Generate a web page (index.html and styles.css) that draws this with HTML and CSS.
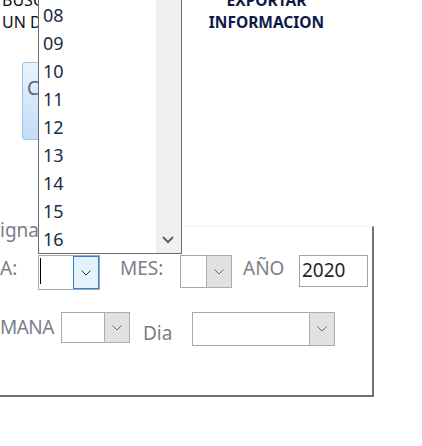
FILE: index.html
```html
<!DOCTYPE html>
<html lang="es">
<head>
<meta charset="utf-8">
<title>Formulario</title>
<link rel="stylesheet" href="styles.css">
</head>
<body>
<div class="page">
  <div class="top">
    <div class="left-col">
      <div class="line cut">BUSCAR</div>
      <div class="line un">UN DIA</div>
      <div class="btn-c"><span>C</span></div>
    </div>
    <div class="export">
      <div class="line">EXPORTAR</div>
      <div class="line">INFORMACION</div>
    </div>
  </div>

  <div class="frame">
    <div class="label igna">igna</div>
    <div class="row row1">
      <span class="label w-a">A:</span>
      <div class="combo c1 focus"><div class="field"><i class="caret"></i></div><div class="btn"><svg width="10" height="6" viewBox="0 0 10 6"><polyline points="0.5,0.5 5,5 9.5,0.5" fill="none" stroke="#333" stroke-width="1"/></svg></div></div>
      <span class="label w-mes">MES:</span>
      <div class="combo c2"><div class="field"></div><div class="btn"><svg width="10" height="6" viewBox="0 0 10 6"><polyline points="0.5,0.5 5,5 9.5,0.5" fill="none" stroke="#666" stroke-width="1"/></svg></div></div>
      <span class="label w-ano">AÑO</span>
      <div class="textbox">2020</div>
    </div>
    <div class="row row2">
      <span class="label w-sem">MANA</span>
      <div class="combo c3"><div class="field"></div><div class="btn"><svg width="10" height="6" viewBox="0 0 10 6"><polyline points="0.5,0.5 5,5 9.5,0.5" fill="none" stroke="#666" stroke-width="1"/></svg></div></div>
      <span class="label w-dia">Dia</span>
      <div class="combo c4"><div class="field"></div><div class="btn"><svg width="10" height="6" viewBox="0 0 10 6"><polyline points="0.5,0.5 5,5 9.5,0.5" fill="none" stroke="#666" stroke-width="1"/></svg></div></div>
    </div>
  </div>

  <div class="list">
    <ul class="items">
      <li>07</li><li>08</li><li>09</li><li>10</li><li>11</li>
      <li>12</li><li>13</li><li>14</li><li>15</li><li>16</li>
    </ul>
    <div class="scroll">
      <svg class="down" width="12" height="8" viewBox="0 0 12 8"><polyline points="1,1 6,6 11,1" fill="none" stroke="#606060" stroke-width="2"/></svg>
    </div>
  </div>
</div>
</body>
</html>
```

FILE: styles.css
```css
* { box-sizing: border-box; }
html, body { margin: 0; padding: 0; background: #fff; }
body {
  width: 422px;
  height: 446px;
  overflow: hidden;
  font-family: "Noto Sans", "Open Sans", sans-serif;
}
.page { position: relative; width: 422px; height: 446px; overflow: hidden; }

.top { display: flex; height: 226px; }
.left-col { width: 160px; flex: none; margin-top: -11px; }
.line { line-height: 22px; white-space: nowrap; }
.cut, .un { font-size: 16px; color: #111; padding-left: 2px; }
.btn-c {
  margin: 29px 0 0 22px;
  width: 120px;
  height: 78px;
  border: 1px solid #9cc4ec;
  border-radius: 3px;
  background: linear-gradient(#e8f2fd, #c4ddf7);
  padding: 14px 0 0 4px;
  font-size: 19px;
  line-height: 22px;
  color: #56657c;
}
.export {
  width: 213px;
  margin-top: -11px;
  text-align: center;
  font-weight: 700;
  font-size: 15.5px;
  color: #0c1a48;
}

.frame {
  width: 374px;
  height: 171px;
  border-top: 1px solid #f0f0f0;
  border-right: 2px solid #727272;
  border-bottom: 2px solid #727272;
}
.label {
  font-size: 19px;
  color: #7a7e89;
  line-height: 26px;
  white-space: nowrap;
  flex: none;
}
.igna { margin-top: -7px; line-height: 20px; height: 20px; }

.row { display: flex; align-items: flex-start; }
.row1 { margin-top: 15px; }
.row2 { margin-top: 22px; }

.w-a { width: 38px; }
.w-mes { width: 80px; padding-left: 20px; }
.w-ano { width: 67px; padding-left: 11px; }
.w-sem { width: 61px; line-height: 30px; letter-spacing: -0.5px; }
.w-dia { width: 62px; padding-left: 13px; line-height: 30px; margin-top: 6px; }

.combo {
  display: flex;
  flex: none;
  border: 1px solid #a9a9a9;
  background: #fff;
}
.combo .field { flex: 1; position: relative; }
.combo .btn {
  width: 26px;
  margin: -1px -1px -1px 0;
  background: #e1e1e1;
  border: 1px solid #adadad;
  display: flex;
  align-items: center;
  justify-content: center;
}
.combo.focus .btn {
  margin: 0;
  background: #e5f1fb;
  border-color: #2f83d6;
}
.caret {
  position: absolute;
  left: 1px;
  top: 2px;
  width: 1px;
  height: 26px;
  background: #000;
}
.c1 { width: 62px; height: 35px; }
.c2 { width: 52px; height: 33px; }
.c3 { width: 69px; height: 31px; }
.c4 { width: 143px; height: 34px; }

.textbox {
  flex: none;
  width: 69px;
  height: 32px;
  border: 1px solid #a3a3a3;
  font-size: 19px;
  line-height: 28px;
  padding-left: 2px;
  color: #262626;
}

.list {
  position: absolute;
  left: 38px;
  top: -28px;
  width: 144px;
  height: 282px;
  border: 1px solid #6b6b6b;
  background: #fff;
  display: flex;
}
.items {
  list-style: none;
  margin: 0;
  padding: 0;
  flex: 1;
}
.items li {
  height: 28px;
  line-height: 28px;
  padding-left: 4px;
  font-size: 18px;
  color: #1e2b46;
}
.scroll {
  width: 25px;
  background: #f0f0f0;
  position: relative;
}
.scroll .down {
  position: absolute;
  left: 6px;
  bottom: 9px;
}
```
